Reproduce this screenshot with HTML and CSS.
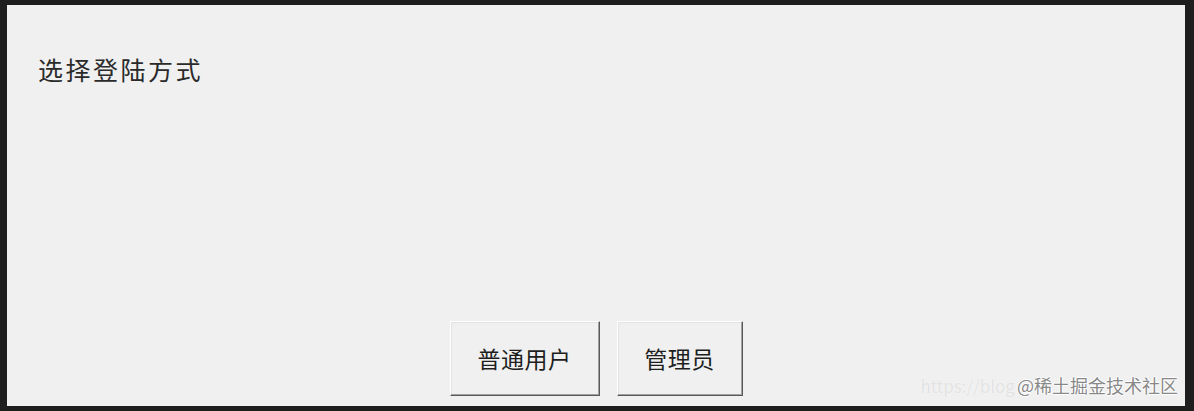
FILE: index.html
```html
<!DOCTYPE html>
<html lang="zh">
<head>
<meta charset="utf-8">
<title>选择登陆方式</title>
<link rel="stylesheet" href="styles.css">
</head>
<body>
<div class="window">
  <div class="prompt">选择登陆方式</div>
  <div class="spacer"></div>
  <div class="actions">
    <button class="btn btn-user">普通用户</button>
    <button class="btn btn-admin">管理员</button>
  </div>
  <div class="watermark"><span class="wm-url">https://blog</span><span class="wm-brand">@稀土掘金技术社区</span></div>
</div>
</body>
</html>
```
FILE: styles.css
```css
html, body {
  margin: 0;
  padding: 0;
  background: #1e1e1e;
  width: 1194px;
  height: 411px;
  overflow: hidden;
}
.window {
  position: relative;
  margin: 5px 9px 5px 7px;
  height: 401px;
  background: #f0f0f0;
  display: flex;
  flex-direction: column;
  font-family: "Noto Sans CJK SC", "Noto Sans", sans-serif;
}
.prompt {
  padding: 49px 0 0 31px;
  font-size: 25px;
  line-height: 30px;
  letter-spacing: 2.5px;
  color: #2a2a2a;
}
.spacer {
  flex: 1;
}
.actions {
  display: flex;
  justify-content: center;
  gap: 17px;
  padding-bottom: 10px;
}
.btn {
  height: 75px;
  padding: 0 0 2px;
  margin: 0;
  background: #f0f0f0;
  border: 1px solid;
  border-color: #ffffff #5a5a5a #5a5a5a #ffffff;
  box-shadow: inset -1px -1px 0 #a0a0a0, inset 1px 1px 0 #e3e3e3;
  font-family: "Noto Sans CJK SC", "Noto Sans", sans-serif;
  font-size: 23px;
  color: #1e1e1e;
  letter-spacing: 0.5px;
}
.btn-user { width: 150px; }
.btn-admin { width: 126px; }
.watermark {
  position: absolute;
  right: 7px;
  bottom: 8px;
  display: flex;
  align-items: baseline;
  gap: 2px;
  font-family: "Noto Sans CJK SC", "Noto Sans", sans-serif;
  white-space: nowrap;
}
.wm-url {
  font-size: 17px;
  color: #e2e2e2;
  text-shadow: 0 0 1px #fff;
}
.wm-brand {
  font-size: 18px;
  color: #888888;
  text-shadow: 1px 0 0 #fff, -1px 0 0 #fff, 0 1px 0 #fff, 0 -1px 0 #fff;
}
```
